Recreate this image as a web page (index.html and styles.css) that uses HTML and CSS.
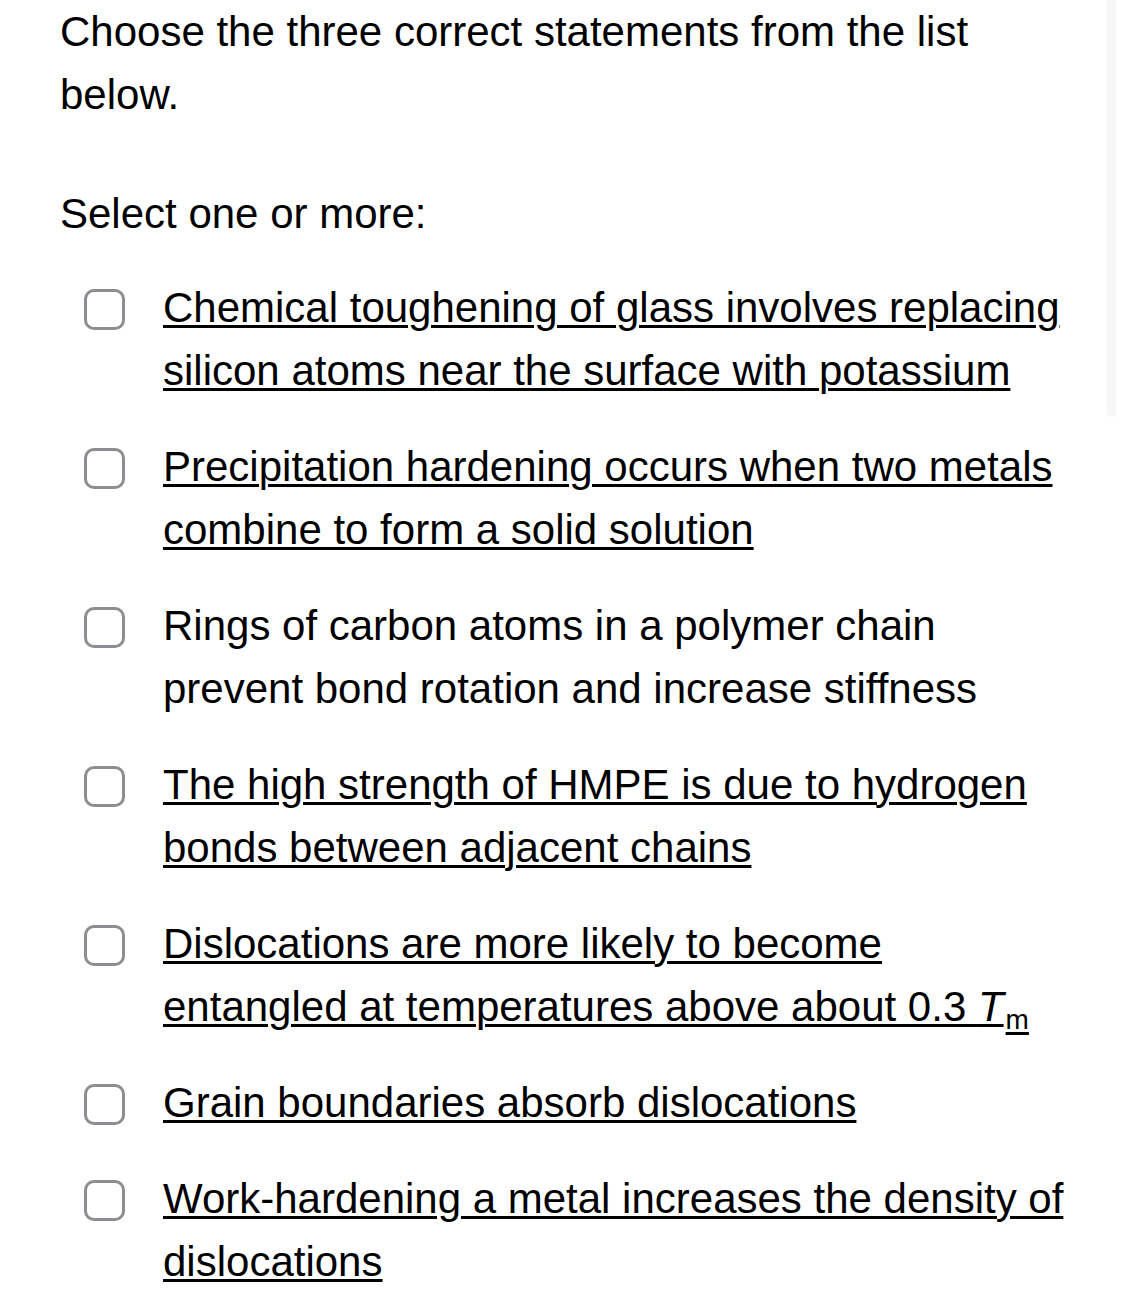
FILE: index.html
```html
<!DOCTYPE html>
<html>
<head>
<meta charset="utf-8">
<link rel="stylesheet" href="styles.css">
</head>
<body>
<div class="page">
  <div class="qtext">Choose the three correct statements from the list below.</div>
  <div class="prompt">Select one or more:</div>
  <div class="answer">
    <div class="opt"><span class="box"></span><span class="lbl u">Chemical toughening of glass involves replacing silicon atoms near the surface with potassium</span></div>
    <div class="opt"><span class="box"></span><span class="lbl u">Precipitation hardening occurs when two metals combine to form a solid solution</span></div>
    <div class="opt"><span class="box"></span><span class="lbl">Rings of carbon atoms in a polymer chain prevent bond rotation and increase stiffness</span></div>
    <div class="opt"><span class="box"></span><span class="lbl u">The high strength of HMPE is due to hydrogen bonds between adjacent chains</span></div>
    <div class="opt"><span class="box"></span><span class="lbl u">Dislocations are more likely to become entangled at temperatures above about 0.3 <i>T</i><sub class="u">m</sub></span></div>
    <div class="opt"><span class="box"></span><span class="lbl u">Grain boundaries absorb dislocations</span></div>
    <div class="opt"><span class="box"></span><span class="lbl u">Work-hardening a metal increases the density of dislocations</span></div>
  </div>
  <div class="scrollbar"></div>
</div>
</body>
</html>
```
FILE: styles.css
```css
html, body {
  margin: 0;
  padding: 0;
  background: #ffffff;
}
.page {
  position: relative;
  padding: 0 55px 0 60px;
  font-family: "Liberation Sans", Arial, Helvetica, sans-serif;
  font-size: 42px;
  line-height: 63px;
  color: #000000;
}
.qtext {
  margin: 0;
}
.prompt {
  margin-top: 56px;
}
.answer {
  display: flex;
  flex-direction: column;
  gap: 33px;
  margin-top: 31px;
}
.opt {
  display: flex;
  align-items: flex-start;
}
.box {
  flex: none;
  width: 35px;
  height: 35px;
  border: 3px solid #8e8e92;
  border-radius: 10px;
  margin: 13px 0 0 24px;
}
.lbl {
  margin-left: 38px;
}
.u {
  text-decoration: underline;
  text-decoration-thickness: 3px;
  text-underline-offset: 3px;
}
.lbl sub {
  font-size: 28px;
  line-height: 0;
  vertical-align: -8px;
  margin-left: 2px;
}
.lbl i {
  font-style: italic;
}
.scrollbar {
  position: absolute;
  top: 0;
  left: 1107px;
  width: 9px;
  height: 417px;
  background: #f7f7f7;
  border-radius: 0 0 5px 5px;
}
```
